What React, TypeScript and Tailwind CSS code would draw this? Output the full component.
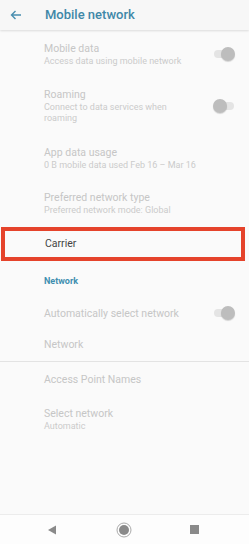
import React from "react";

function Toggle({ on }: { on: boolean }) {
  return (
    <div className="relative w-[22px] h-[14px] flex items-center">
      <div className="w-[20px] h-[8px] mx-auto rounded-full bg-[#e4e4e4]" />
      <div
        className={
          "absolute top-0 w-[14px] h-[14px] rounded-full bg-[#bdbdbd] shadow-[0_1px_1px_rgba(0,0,0,0.15)] " +
          (on ? "right-0" : "left-0")
        }
      />
    </div>
  );
}

function Row({
  title,
  sub,
  toggle,
  wrap,
  className = "",
}: {
  title: string;
  sub?: string;
  toggle?: "on" | "off";
  wrap?: boolean;
  className?: string;
}) {
  return (
    <div className={"flex pl-[44px] pr-[14px] " + className}>
      <div className="flex-1 min-w-0">
        <div className="text-[10.5px] leading-[13px] text-[#c6c6c6]">{title}</div>
        {sub && (
          <div
            className={
              "text-[9px] leading-[11px] text-[#cbcbcb] mt-[1px] " +
              (wrap ? "max-w-[150px]" : "whitespace-nowrap")
            }
          >
            {sub}
          </div>
        )}
      </div>
      {toggle && <Toggle on={toggle === "on"} />}
    </div>
  );
}

export default function App() {
  return (
    <div
      className="w-[249px] h-[544px] bg-[#fafafa] flex flex-col overflow-hidden"
      style={{ fontFamily: "Roboto, 'Liberation Sans', sans-serif" }}
    >
      <div className="h-[30px] shrink-0 flex items-center bg-[#f7f7f7] shadow-[0_1px_2px_rgba(0,0,0,0.12)] relative z-10">
        <svg width="12" height="10" viewBox="0 0 12 10" className="ml-[10px]">
          <path d="M11 5H2M5.5 1L1.5 5l4 4" fill="none" stroke="#4a8fb0" strokeWidth="1.4" />
        </svg>
        <span className="ml-[23px] text-[13px] font-medium text-[#3f88a8]">Mobile network</span>
      </div>

      <div className="flex-1 flex flex-col">
        <Row className="h-[42px] mt-[3px] items-center" title="Mobile data" sub="Access data using mobile network" toggle="on" />
        <Row className="h-[62px] items-center" title="Roaming" sub="Connect to data services when roaming" toggle="off" wrap />
        <Row className="h-[42px] items-center" title="App data usage" sub="0 B mobile data used Feb 16 – Mar 16" />
        <Row className="h-[48px] items-center" title="Preferred network type" sub="Preferred network mode: Global" />

        <div className="h-[34px] ml-[1px] mr-[4px] border-[4px] border-[#e5432b] flex items-center pl-[40px]">
          <span className="text-[10.5px] text-[#444]">Carrier</span>
        </div>

        <div className="h-[42px] flex items-center pl-[44px]">
          <span className="text-[9px] font-bold text-[#3f8fb0]">Network</span>
        </div>
        <Row className="h-[20px] items-center" title="Automatically select network" toggle="on" />
        <Row className="h-[38px] items-start pt-[15px]" title="Network" />
        <div className="h-px bg-[#e3e3e3]" />
        <Row className="h-[34px] items-center" title="Access Point Names" />
        <Row className="h-[46px] items-center" title="Select network" sub="Automatic" />
      </div>

      <div className="h-[30px] shrink-0 border-t border-[#ececec] bg-[#fdfdfd] flex items-center justify-between pl-[47px] pr-[50px]">
        <svg width="10" height="10" viewBox="0 0 10 10">
          <path d="M9 0.5V9.5L1 5Z" fill="#8a8a8a" />
        </svg>
        <svg width="16" height="16" viewBox="0 0 16 16">
          <circle cx="8" cy="8" r="7" fill="none" stroke="#a0a0a0" strokeWidth="0.9" />
          <circle cx="8" cy="8" r="5" fill="#8a8a8a" />
        </svg>
        <div className="w-[9px] h-[9px] bg-[#8a8a8a]" />
      </div>
    </div>
  );
}
